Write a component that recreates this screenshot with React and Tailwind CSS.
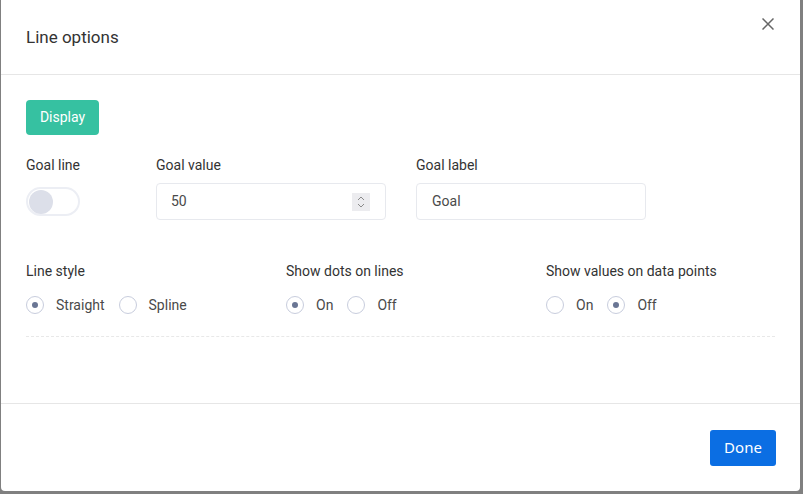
import React from 'react';

const Radio = ({ checked, label }) => (
  <label className="flex items-center gap-3 mr-[14px]">
    <span className="w-[18px] h-[18px] rounded-full border border-[#c8cddd] bg-white flex items-center justify-center">
      {checked && <span className="w-[6px] h-[6px] rounded-full bg-[#6a7694]"></span>}
    </span>
    <span className="text-[14px] text-[#4a4a4a]">{label}</span>
  </label>
);

const RadioGroup = ({ title, options, selected }) => (
  <div className="flex flex-col">
    <div className="text-[14px] leading-5 text-[#333]">{title}</div>
    <div className="flex items-center mt-[15px] h-[18px]">
      {options.map((o) => (
        <Radio key={o} label={o} checked={o === selected} />
      ))}
    </div>
  </div>
);

const App = () => {
  return (
    <div className="h-[494px] w-[803px] bg-[#808080] overflow-hidden" style={{ fontFamily: 'Roboto, "Liberation Sans", sans-serif' }}>
      <div className="ml-[1px] w-[799px] h-[491px] bg-white rounded-b-[4px] flex flex-col">
        <div className="h-[75px] border-b border-[#e6e6e6] flex items-start justify-between pl-[25px] pr-[26px]">
          <h2 className="text-[17px] text-[#333] mt-[27px] leading-5">Line options</h2>
          <button className="mt-[18px] text-[#666]">
            <svg width="12" height="12" viewBox="0 0 12 12" fill="none" stroke="currentColor" strokeWidth="1.5">
              <path d="M0.5 0.5L11.5 11.5M11.5 0.5L0.5 11.5" />
            </svg>
          </button>
        </div>

        <div className="flex-1 px-[25px] pt-[25px]">
          <button className="h-[35px] w-[73px] rounded-[4px] bg-[#36c1a1] text-white text-[14px]">Display</button>

          <div className="grid grid-cols-[130px_260px_260px] mt-[20px]">
            <div className="flex flex-col">
              <div className="text-[14px] leading-5 text-[#333]">Goal line</div>
              <div className="mt-[12px] w-[54px] h-[29px] rounded-full border-2 border-[#eceef4] bg-white flex items-center pl-[1px]">
                <span className="w-[24px] h-[24px] rounded-full bg-[#dcdfe9]"></span>
              </div>
            </div>
            <div className="flex flex-col">
              <div className="text-[14px] leading-5 text-[#333]">Goal value</div>
              <div className="mt-[8px] w-[230px] h-[37px] border border-[#e7e9ee] rounded-[4px] flex items-center justify-between pl-[14px] pr-[15px]">
                <span className="text-[14px] text-[#4a4a4a]">50</span>
                <span className="w-[18px] h-[18px] bg-[#ececef] flex items-center justify-center">
                  <svg width="10" height="14" viewBox="0 0 10 14" fill="none" stroke="#8a8a8a" strokeWidth="1">
                    <path d="M2 5L5 2L8 5M2 9L5 12L8 9" />
                  </svg>
                </span>
              </div>
            </div>
            <div className="flex flex-col">
              <div className="text-[14px] leading-5 text-[#333]">Goal label</div>
              <div className="mt-[8px] w-[230px] h-[37px] border border-[#e7e9ee] rounded-[4px] flex items-center pl-[15px]">
                <span className="text-[14px] text-[#4a4a4a]">Goal</span>
              </div>
            </div>
          </div>

          <div className="grid grid-cols-[260px_260px_230px] mt-[41px]">
            <RadioGroup title="Line style" options={['Straight', 'Spline']} selected="Straight" />
            <RadioGroup title="Show dots on lines" options={['On', 'Off']} selected="On" />
            <RadioGroup title="Show values on data points" options={['On', 'Off']} selected="Off" />
          </div>

          <div className="mt-[22px] border-t border-dashed border-[#e8e8e8]"></div>
        </div>

        <div className="h-[88px] border-t border-[#e6e6e6] flex items-center justify-end pr-[24px]">
          <button className="h-[36px] w-[66px] rounded-[3px] bg-[#0b6ee3] text-white text-[15px]" style={{ fontFamily: '"Noto Sans", sans-serif' }}>Done</button>
        </div>
      </div>
    </div>
  );
};

export default App;
